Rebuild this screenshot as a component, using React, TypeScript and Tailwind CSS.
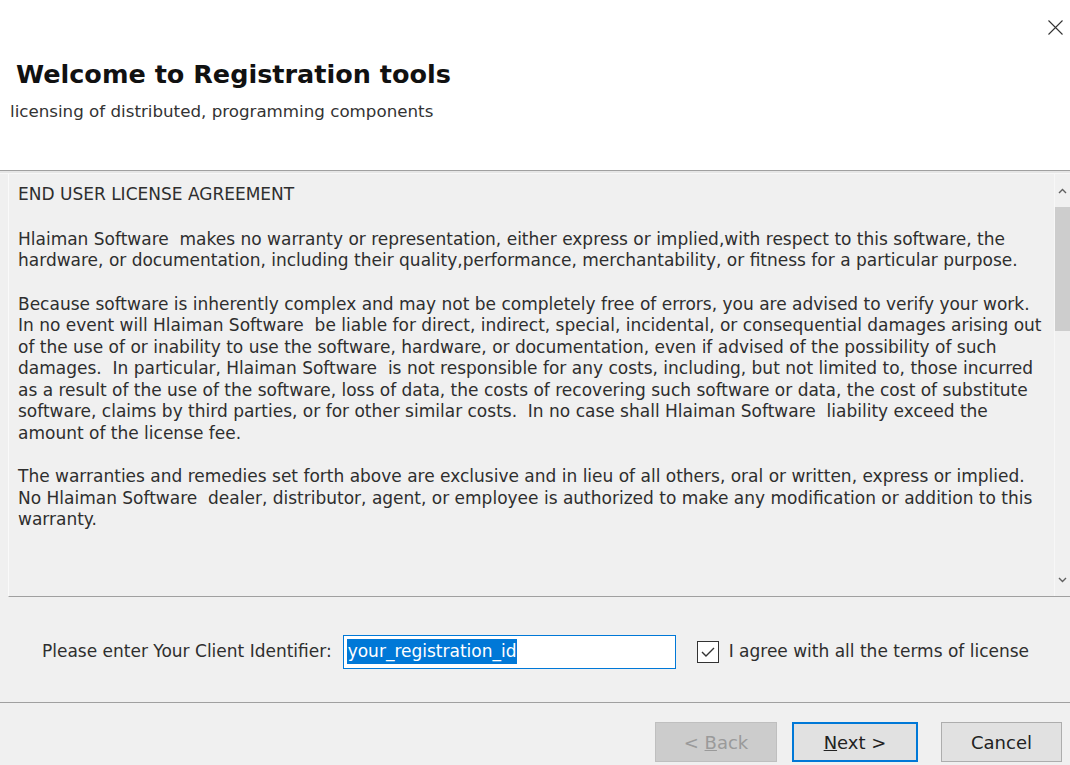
const font = { fontFamily: "Tahoma, 'DejaVu Sans', sans-serif" };

const intro = [
  "Hlaiman Software  makes no warranty or representation, either express or implied,with respect to this software, the",
  "hardware, or documentation, including their quality,performance, merchantability, or fitness for a particular purpose.",
];

const liability = [
  "Because software is inherently complex and may not be completely free of errors, you are advised to verify your work.",
  "In no event will Hlaiman Software  be liable for direct, indirect, special, incidental, or consequential damages arising out",
  "of the use of or inability to use the software, hardware, or documentation, even if advised of the possibility of such",
  "damages.  In particular, Hlaiman Software  is not responsible for any costs, including, but not limited to, those incurred",
  "as a result of the use of the software, loss of data, the costs of recovering such software or data, the cost of substitute",
  "software, claims by third parties, or for other similar costs.  In no case shall Hlaiman Software  liability exceed the",
  "amount of the license fee.",
];

const warranty = [
  "The warranties and remedies set forth above are exclusive and in lieu of all others, oral or written, express or implied.",
  "No Hlaiman Software  dealer, distributor, agent, or employee is authorized to make any modification or addition to this",
  "warranty.",
];

const Para = ({ lines }: { lines: string[] }) => (
  <div className="mb-[22px]">
    {lines.map((l) => (
      <div key={l} className="whitespace-pre h-[21.5px] leading-[21.5px]">
        {l}
      </div>
    ))}
  </div>
);

const WizardButton = ({
  children,
  disabled,
  primary,
  className = "",
}: {
  children: React.ReactNode;
  disabled?: boolean;
  primary?: boolean;
  className?: string;
}) => (
  <button
    className={
      "h-[40px] text-[18px] " +
      className +
      " " +
      (disabled
        ? "bg-[#cccccc] text-[#9a9a9a] border border-[#bfbfbf]"
        : primary
          ? "bg-[#e1e1e1] text-[#222] border-2 border-[#0078d7]"
          : "bg-[#e1e1e1] text-[#222] border border-[#adadad]")
    }
  >
    {children}
  </button>
);

export default function App() {
  return (
    <div className="w-[1070px] h-[765px] flex flex-col bg-[#f0f0f0] overflow-hidden" style={font}>
      <div className="h-[170px] bg-white relative shrink-0">
        {/* close glyph */}
        <svg className="absolute right-[7px] top-[20px]" width="15" height="15" viewBox="0 0 15 15">
          <path d="M0.5 0.5L14.5 14.5M14.5 0.5L0.5 14.5" stroke="#333" strokeWidth="1.1" />
        </svg>
        <div className="pt-[58px]">
          <h1 className="pl-[16px] text-[25.5px] font-bold text-[#111] leading-[32px]">
            Welcome to Registration tools
          </h1>
          <p className="pl-[10px] text-[16.7px] text-[#333] leading-[22px] mt-[10px]">
            licensing of distributed, programming components
          </p>
        </div>
      </div>
      <div className="h-[4px] border-t border-[#a0a0a0] bg-[#e6e6e6] border-b border-b-[#f7f7f7] shrink-0" />
      <div className="h-[423px] ml-[8px] border-l border-[#fafafa] border-b border-b-[#a0a0a0] flex shrink-0">
        <div className="flex-1 pl-[9px] pt-[10px] text-[17px] text-[#2e2e2e]">
          <div className="h-[21.5px] leading-[21.5px] mb-[23px]">END USER LICENSE AGREEMENT</div>
          <Para lines={intro} />
          <Para lines={liability} />
          <Para lines={warranty} />
        </div>
        <div className="w-[16px] flex flex-col items-center bg-[#f0f0f0] border-l border-[#f7f7f7]">
          <div className="h-[33px] flex items-center text-[#606060]">
            <svg width="9" height="6" viewBox="0 0 9 6">
              <path d="M1 5L4.5 1.5L8 5" fill="none" stroke="currentColor" strokeWidth="1.4" />
            </svg>
          </div>
          <div className="w-[15px] h-[124px] bg-[#cdcdcd]" />
          <div className="flex-1" />
          <div className="h-[33px] flex items-center text-[#606060]">
            <svg width="9" height="6" viewBox="0 0 9 6">
              <path d="M1 1L4.5 4.5L8 1" fill="none" stroke="currentColor" strokeWidth="1.4" />
            </svg>
          </div>
        </div>
      </div>
      <div className="h-[106px] border-b border-[#a0a0a0] flex items-center pt-[4px] pl-[42px] text-[17px] text-[#2e2e2e] shrink-0">
        <span className="mr-[11px]">Please enter Your Client Identifier:</span>
        <div className="w-[333px] h-[34px] border border-[#0078d7] bg-white flex items-center pl-[3px]">
          <span className="bg-[#0078d7] text-white leading-[25px] px-[1px]">your_registration_id</span>
        </div>
        <div className="ml-[21px] w-[22px] h-[22px] border border-[#333] bg-white flex items-center justify-center">
          <svg width="16" height="12" viewBox="0 0 16 12">
            <path d="M2 6L6 10L14 2" fill="none" stroke="#333" strokeWidth="1.4" />
          </svg>
        </div>
        <span className="ml-[10px]">I agree with all the terms of license</span>
      </div>
      <div className="flex-1 flex items-start justify-end pt-[19px] pr-[8px]">
        <WizardButton disabled className="w-[122px]">
          &lt; <span className="underline">B</span>ack
        </WizardButton>
        <WizardButton primary className="w-[126px] ml-[15px]">
          <span className="underline">N</span>ext &gt;
        </WizardButton>
        <WizardButton className="w-[121px] ml-[23px]">Cancel</WizardButton>
      </div>
    </div>
  );
}
